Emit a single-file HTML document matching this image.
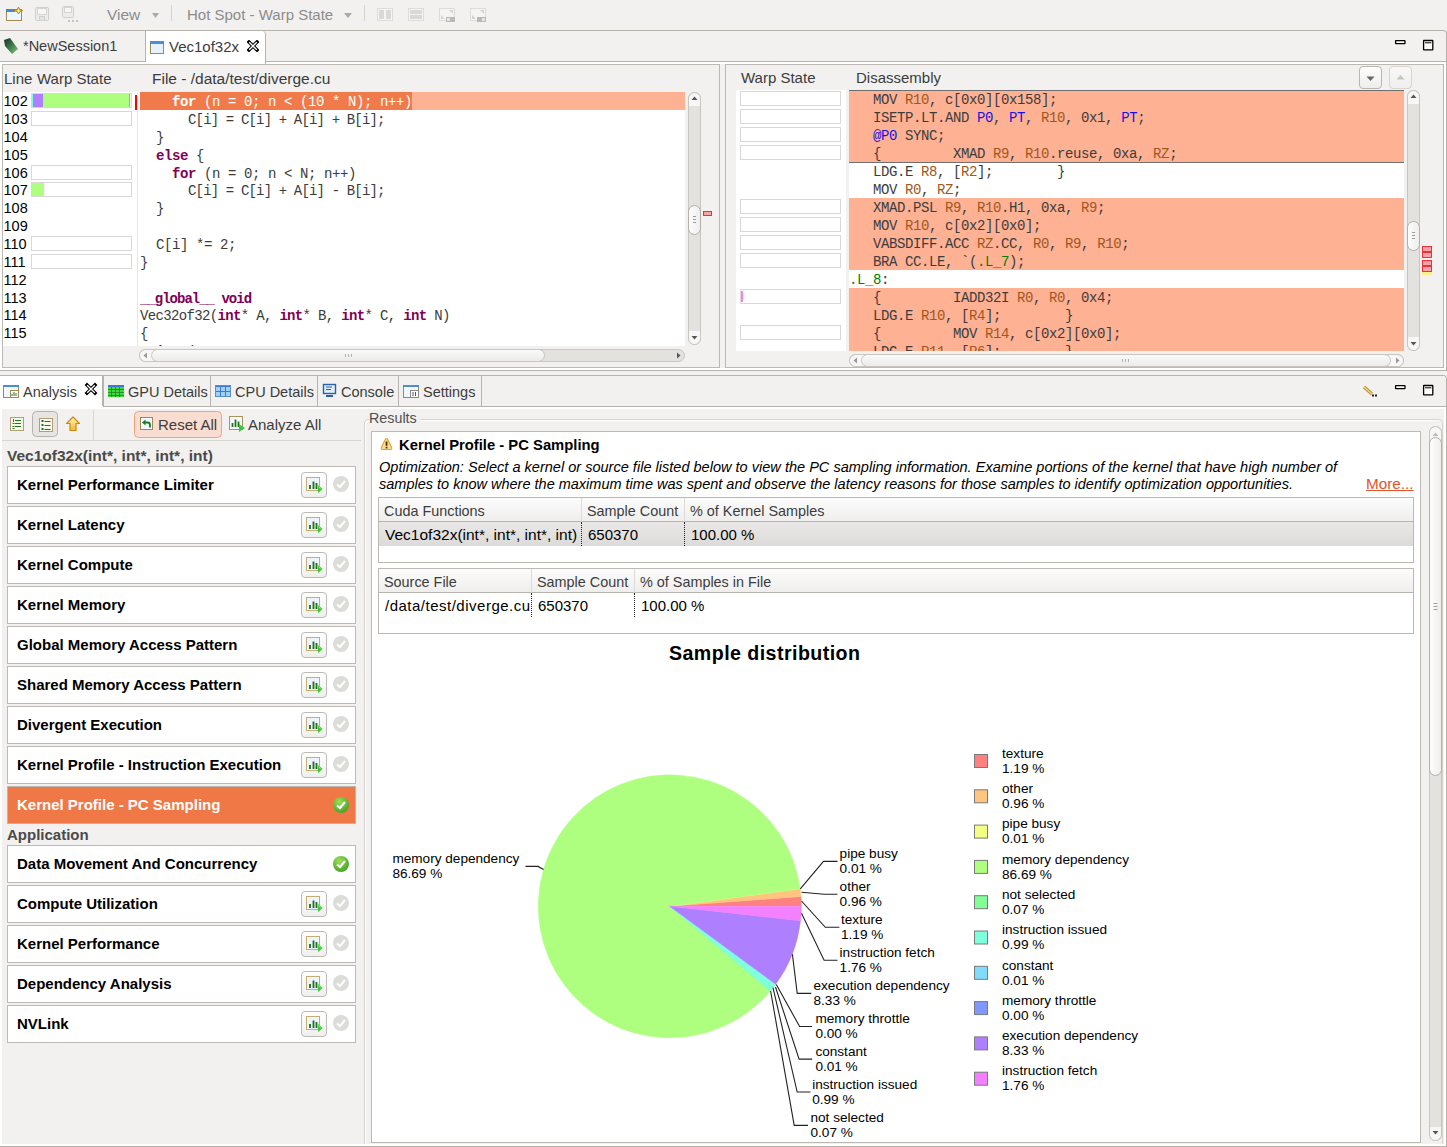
<!DOCTYPE html>
<html><head><meta charset="utf-8">
<style>
*{box-sizing:border-box;margin:0;padding:0}
html,body{width:1447px;height:1147px;overflow:hidden;background:#f2f1f0;font-family:"Liberation Sans",sans-serif;font-size:14px;color:#3c3c3c;position:relative}
.a{position:absolute}
.mono{font-family:"Liberation Mono",monospace;font-size:14px;letter-spacing:-0.4px;white-space:pre}
.t{white-space:pre;line-height:1}
</style></head><body>
<!-- ===== TOP TOOLBAR ===== -->
<svg class="a" style="left:0;top:0" width="500" height="30">
 <!-- new window icon -->
 <rect x="6.5" y="9.5" width="15" height="11" fill="#eaf6fd" stroke="#a28a4e"/>
 <rect x="6" y="9" width="9" height="3" fill="#4a86c8"/>
 <path d="M18.5 7 L20 10 L23 10.5 L20 11.5 L18.5 14 L17 11.5 L14 10.5 L17 10 Z" fill="#f6e27a" stroke="#b38b16" stroke-width="1"/>
 <!-- save (disabled) -->
 <rect x="35.5" y="7.5" width="13" height="13" rx="1" fill="#ececec" stroke="#cfcfcf"/>
 <rect x="37.5" y="8.5" width="9" height="6" fill="#f6f6f6" stroke="#d4d4d4"/>
 <rect x="39.5" y="16.5" width="5" height="4" fill="#e4e4e4" stroke="#d0d0d0"/>
 <!-- save as (disabled) -->
 <rect x="62.5" y="6.5" width="11" height="11" rx="1" fill="#ececec" stroke="#cfcfcf"/>
 <rect x="64.5" y="7.5" width="7" height="5" fill="#f6f6f6" stroke="#d4d4d4"/>
 <rect x="68" y="20" width="2" height="2" fill="#c4c4c4"/><rect x="72" y="20" width="2" height="2" fill="#c4c4c4"/><rect x="76" y="20" width="2" height="2" fill="#c4c4c4"/>
 <!-- triangles -->
 <path d="M152 13 L159 13 L155.5 18 Z" fill="#a9a9a9"/>
 <path d="M344 13 L352 13 L348 18 Z" fill="#a9a9a9"/>
 <!-- separators -->
 <rect x="171" y="5" width="1" height="16" fill="#d6d4d0"/>
 <rect x="364" y="5" width="1" height="16" fill="#d6d4d0"/>
 <!-- disabled layout icons -->
 <g>
  <rect x="377.5" y="8.5" width="15" height="12" fill="#f4f4f3" stroke="#dddcda"/><rect x="379" y="10" width="5" height="9" fill="#d9d9d9"/><rect x="386" y="10" width="5" height="9" fill="#d9d9d9"/>
  <rect x="408.5" y="8.5" width="15" height="12" fill="#f4f4f3" stroke="#dddcda"/><rect x="410" y="10" width="12" height="4" fill="#d9d9d9"/><rect x="410" y="15" width="12" height="4" fill="#d9d9d9"/>
  <rect x="439.5" y="8.5" width="15" height="12" fill="#f4f4f3" stroke="#dddcda"/><path d="M449 10 H453 V14 Z M441 15 V19 H445 Z" fill="#d4d4d4"/><rect x="446" y="17" width="9" height="5" fill="#b8b8b4"/><rect x="447" y="18" width="3" height="3" fill="#e6e6e0"/>
  <rect x="470.5" y="8.5" width="15" height="12" fill="#f4f4f3" stroke="#dddcda"/><path d="M480 10 H484 V14 Z M472 15 V19 H476 Z" fill="#d4d4d4"/><rect x="477" y="17" width="9" height="5" fill="#b8b8b4"/><rect x="482" y="18" width="3" height="3" fill="#e6e6e0"/>
 </g>
</svg>
<div class="a t" style="left:107px;top:7px;font-size:15.5px;color:#8c8c8c">View</div>
<div class="a t" style="left:187px;top:7px;font-size:15px;color:#8c8c8c">Hot Spot - Warp State</div>


<!-- ===== EDITOR TAB FOLDER ===== -->
<div class="a" style="left:0;top:30px;width:1447px;height:341px;border:1px solid #b6b3ac;border-left:none;background:#f2f1f0;border-radius:0 4px 0 0"></div>
<div class="a" style="left:0;top:61px;width:1447px;height:1px;background:#b6b3ac"></div>
<div class="a" style="left:0;top:62px;width:1446px;height:2px;background:#ffffff"></div><div class="a" style="left:0;top:368px;width:1446px;height:2px;background:#ffffff"></div><div class="a" style="left:0;top:62px;width:2px;height:308px;background:#ffffff"></div><div class="a" style="left:1444px;top:62px;width:2px;height:308px;background:#ffffff"></div>
<!-- tab 1 inactive -->
<div class="a" style="left:0;top:31px;width:146px;height:30px;border-right:1px solid #b6b3ac;background:#f2f1f0"></div>
<svg class="a" style="left:3px;top:37px" width="16" height="18"><defs><linearGradient id="ns" x1="0" y1="0" x2="1" y2="1"><stop offset="0" stop-color="#1a2a2a"/><stop offset="0.5" stop-color="#3e7a4a"/><stop offset="1" stop-color="#8ac87a"/></linearGradient></defs><path d="M1 3 L7 1 L15 12 L9 17 L2 9 Z" fill="url(#ns)"/></svg>
<div class="a t" style="left:23px;top:39px;font-size:14.5px;color:#3c3c3c">*NewSession1</div>
<!-- tab 2 active -->
<div class="a" style="left:146px;top:31px;width:120px;height:33px;background:#ffffff;border-right:1px solid #b6b3ac;border-radius:0 4px 0 0"></div>
<svg class="a" style="left:150px;top:41px" width="15" height="14"><rect x="0.5" y="0.5" width="13" height="12" fill="#e6f3fc" stroke="#a08a52"/><rect x="0" y="0" width="14" height="3" fill="#4a8fd4"/></svg>
<div class="a t" style="left:169px;top:39px;font-size:15px;color:#3c3c3c">Vec1of32x</div>
<svg class="a" style="left:247px;top:40px" width="12" height="12"><path d="M2 2 L10 10 M10 2 L2 10" stroke="#000" stroke-width="3.4" stroke-linecap="square"/><path d="M2.2 2.2 L9.8 9.8 M9.8 2.2 L2.2 9.8" stroke="#fff" stroke-width="1.3" stroke-linecap="butt"/></svg>
<!-- min/max -->
<svg class="a" style="left:1390px;top:36px" width="50" height="18"><rect x="5.6" y="4.6" width="9.4" height="3" rx="0.3" fill="#fff" stroke="#000" stroke-width="1.3"/><rect x="33.6" y="4.5" width="9.2" height="9.3" rx="0.3" fill="#fff" stroke="#000" stroke-width="1.3"/><path d="M35 6.8 H41.4" stroke="#000" stroke-width="1"/></svg>

<!-- ===== LEFT EDITOR ===== -->
<div class="a" style="left:2px;top:64px;width:718px;height:304px;border:1px solid #bcb9b2;background:#f2f1f0"></div>
<div class="a t" style="left:4px;top:71px;font-size:15px;color:#3c3c3c">Line</div>
<div class="a t" style="left:37px;top:71px;font-size:15px;color:#3c3c3c">Warp State</div>
<div class="a t" style="left:152px;top:71px;font-size:15.5px;color:#3c3c3c">File - /data/test/diverge.cu</div>
<div class="a" style="left:3px;top:92px;width:134px;height:254px;background:#fff;overflow:hidden" id="gut">
<div class="a t" style="left:0.5px;top:2px;font-size:14.5px;color:#000">102</div>
<div class="a" style="left:28px;top:1px;width:101px;height:15px;border:1px solid #d8d8d8;background:#fff"></div>
<div class="a" style="left:29px;top:2px;width:1px;height:13px;background:#80ffdc"></div>
<div class="a" style="left:30px;top:2px;width:10px;height:13px;background:#ae80ff"></div>
<div class="a" style="left:40px;top:2px;width:86px;height:13px;background:#aeff80"></div>
<div class="a" style="left:126px;top:2px;width:1px;height:13px;background:#ff8080"></div>
<div class="a t" style="left:0.5px;top:20px;font-size:14.5px;color:#000">103</div>
<div class="a" style="left:28px;top:19px;width:101px;height:15px;border:1px solid #d8d8d8;background:#fff"></div>
<div class="a t" style="left:0.5px;top:38px;font-size:14.5px;color:#000">104</div>
<div class="a t" style="left:0.5px;top:56px;font-size:14.5px;color:#000">105</div>
<div class="a t" style="left:0.5px;top:74px;font-size:14.5px;color:#000">106</div>
<div class="a" style="left:28px;top:73px;width:101px;height:15px;border:1px solid #d8d8d8;background:#fff"></div>
<div class="a t" style="left:0.5px;top:91px;font-size:14.5px;color:#000">107</div>
<div class="a" style="left:28px;top:90px;width:101px;height:15px;border:1px solid #d8d8d8;background:#fff"></div>
<div class="a" style="left:29px;top:91px;width:12px;height:13px;background:#aeff80"></div>
<div class="a t" style="left:0.5px;top:109px;font-size:14.5px;color:#000">108</div>
<div class="a t" style="left:0.5px;top:127px;font-size:14.5px;color:#000">109</div>
<div class="a t" style="left:0.5px;top:145px;font-size:14.5px;color:#000">110</div>
<div class="a" style="left:28px;top:144px;width:101px;height:15px;border:1px solid #d8d8d8;background:#fff"></div>
<div class="a t" style="left:0.5px;top:163px;font-size:14.5px;color:#000">111</div>
<div class="a" style="left:28px;top:162px;width:101px;height:15px;border:1px solid #d8d8d8;background:#fff"></div>
<div class="a t" style="left:0.5px;top:181px;font-size:14.5px;color:#000">112</div>
<div class="a t" style="left:0.5px;top:199px;font-size:14.5px;color:#000">113</div>
<div class="a t" style="left:0.5px;top:216px;font-size:14.5px;color:#000">114</div>
<div class="a t" style="left:0.5px;top:234px;font-size:14.5px;color:#000">115</div>
<div class="a t" style="left:0.5px;top:252px;font-size:14.5px;color:#000">116</div>
<div class="a" style="left:132px;top:3px;width:2px;height:15px;background:#ff0000"></div>
</div>
<div class="a" style="left:137px;top:92px;width:1px;height:254px;background:#e6e6e6"></div>
<div class="a" style="left:138px;top:92px;width:547px;height:254px;background:#fff;overflow:hidden">
<div class="a" style="left:2px;top:0;width:545px;height:18px;background:#ffb194"></div>
<div class="a" style="left:2px;top:0;width:272px;height:18px;background:#f07a4a"></div>
<div class="a mono" style="left:2px;top:2px;line-height:16px"><span style="color:#fff">    </span><span style="color:#fff;font-weight:bold">for</span><span style="color:#fff"> (n = 0; n < (10 * N); n++)</span></div>
<div class="a mono" style="left:2px;top:20px;line-height:16px"><span style="color:#3c3c3c">      </span><span style="color:#3c3c3c;letter-spacing:-0.84px">C[i] = C[i] + A[i] + B[i];</span></div>
<div class="a mono" style="left:2px;top:38px;line-height:16px"><span style="color:#3c3c3c">  }</span></div>
<div class="a mono" style="left:2px;top:56px;line-height:16px"><span style="color:#3c3c3c">  </span><span style="color:#7f0055;font-weight:bold">else</span><span style="color:#3c3c3c"> {</span></div>
<div class="a mono" style="left:2px;top:74px;line-height:16px"><span style="color:#3c3c3c">    </span><span style="color:#7f0055;font-weight:bold">for</span><span style="color:#3c3c3c"> (n = 0; n < N; n++)</span></div>
<div class="a mono" style="left:2px;top:91px;line-height:16px"><span style="color:#3c3c3c">      </span><span style="color:#3c3c3c;letter-spacing:-0.84px">C[i] = C[i] + A[i] - B[i];</span></div>
<div class="a mono" style="left:2px;top:109px;line-height:16px"><span style="color:#3c3c3c">  }</span></div>
<div class="a mono" style="left:2px;top:127px;line-height:16px"></div>
<div class="a mono" style="left:2px;top:145px;line-height:16px"><span style="color:#3c3c3c">  C[i] *= 2;</span></div>
<div class="a mono" style="left:2px;top:163px;line-height:16px"><span style="color:#3c3c3c">}</span></div>
<div class="a mono" style="left:2px;top:181px;line-height:16px"></div>
<div class="a mono" style="left:2px;top:199px;line-height:16px;letter-spacing:-1px"><span style="color:#7f0055;font-weight:bold">__global__</span><span style="color:#3c3c3c"> </span><span style="color:#7f0055;font-weight:bold">void</span></div>
<div class="a mono" style="left:2px;top:216px;line-height:16px;letter-spacing:-0.66px"><span style="color:#3c3c3c">Vec32of32(</span><span style="color:#7f0055;font-weight:bold">int</span><span style="color:#3c3c3c">* A, </span><span style="color:#7f0055;font-weight:bold">int</span><span style="color:#3c3c3c">* B, </span><span style="color:#7f0055;font-weight:bold">int</span><span style="color:#3c3c3c">* C, </span><span style="color:#7f0055;font-weight:bold">int</span><span style="color:#3c3c3c"> N)</span></div>
<div class="a mono" style="left:2px;top:234px;line-height:16px"><span style="color:#3c3c3c">{</span></div>
<div class="a mono" style="left:2px;top:252px;line-height:16px"><span style="color:#3c3c3c">  </span><span style="color:#7f0055;font-weight:bold">int</span><span style="color:#3c3c3c"> i;</span></div>
</div>
<div class="a" style="left:688px;top:92px;width:13px;height:253px;border:1px solid #c9c6c0;border-radius:7px;background:#e3e2df"></div>
<div class="a" style="left:688px;top:92px;width:13px;height:14px;border:1px solid #c9c6c0;border-bottom:none;border-radius:7px 7px 0 0;background:#f7f7f7"></div>
<div class="a" style="left:688px;top:331px;width:13px;height:14px;border:1px solid #c9c6c0;border-top:none;border-radius:0 0 7px 7px;background:#f7f7f7"></div>
<svg class="a" style="left:688px;top:92px" width="13" height="253"><path d="M3.5 8 L9.5 8 L6.5 4.5 Z" fill="#555"/><path d="M3.5 244 L9.5 244 L6.5 247.5 Z" fill="#555"/></svg>
<div class="a" style="left:688px;top:205px;width:13px;height:30px;border:1px solid #b3afa9;border-radius:7px;background:linear-gradient(90deg,#fdfdfd,#efeeed)"></div>
<svg class="a" style="left:688px;top:205px" width="13" height="30"><path d="M5 11.5 H8 M5 14.5 H8 M5 17.5 H8" stroke="#9a9a9a" stroke-width="1"/></svg>
<div class="a" style="left:703px;top:211px;width:9px;height:5px;border:1px solid #e8323c;background:#f6a2a6"></div>
<div class="a" style="left:139px;top:349px;width:546px;height:13px;border:1px solid #c9c6c0;border-radius:7px;background:#e3e2df"></div>
<div class="a" style="left:139px;top:349px;width:16px;height:13px;border:1px solid #c9c6c0;border-right:none;border-radius:7px 0 0 7px;background:#f7f7f7"></div>
<div class="a" style="left:151px;top:349px;width:394px;height:13px;border:1px solid #c9c6c0;border-radius:7px;background:linear-gradient(#fafafa,#ebebea)"></div>
<svg class="a" style="left:139px;top:349px" width="546" height="13"><path d="M206.5 5 V8 M209.5 5 V8 M212.5 5 V8" stroke="#b0b0b0"/><path d="M8 3.5 L8 9.5 L4.5 6.5 Z" fill="#999"/><path d="M538 3.5 L538 9.5 L541.5 6.5 Z" fill="#555"/></svg>
<!-- ===== RIGHT EDITOR ===== -->
<div class="a" style="left:725px;top:64px;width:719px;height:304px;border:1px solid #bcb9b2;background:#f2f1f0"></div>
<div class="a t" style="left:741px;top:70px;font-size:15px;color:#3c3c3c">Warp State</div>
<div class="a t" style="left:856px;top:70px;font-size:15px;color:#3c3c3c">Disassembly</div>
<div class="a" style="left:1359px;top:66px;width:23px;height:23px;border:1px solid #b9b6b0;border-radius:4px;background:linear-gradient(#fdfdfd,#eeeeed)"></div>
<div class="a" style="left:1389px;top:66px;width:23px;height:23px;border:1px solid #d6d4cf;border-radius:4px;background:linear-gradient(#f8f8f7,#efefee)"></div>
<svg class="a" style="left:1359px;top:66px" width="60" height="23"><path d="M7.5 10.5 L15.5 10.5 L11.5 15 Z" fill="#666"/><path d="M37.5 13.5 L45.5 13.5 L41.5 9 Z" fill="#c4c4c4"/></svg>
<div class="a" style="left:736px;top:90px;width:110px;height:261px;background:#fff;overflow:hidden">
<div class="a" style="left:4px;top:1px;width:101px;height:15px;border:1px solid #d8d8d8"></div>
<div class="a" style="left:4px;top:19px;width:101px;height:15px;border:1px solid #d8d8d8"></div>
<div class="a" style="left:4px;top:37px;width:101px;height:15px;border:1px solid #d8d8d8"></div>
<div class="a" style="left:4px;top:55px;width:101px;height:15px;border:1px solid #d8d8d8"></div>
<div class="a" style="left:4px;top:109px;width:101px;height:15px;border:1px solid #d8d8d8"></div>
<div class="a" style="left:4px;top:127px;width:101px;height:15px;border:1px solid #d8d8d8"></div>
<div class="a" style="left:4px;top:145px;width:101px;height:15px;border:1px solid #d8d8d8"></div>
<div class="a" style="left:4px;top:163px;width:101px;height:15px;border:1px solid #d8d8d8"></div>
<div class="a" style="left:4px;top:199px;width:101px;height:15px;border:1px solid #d8d8d8"></div>
<div class="a" style="left:5px;top:201px;width:2px;height:11px;background:#f380ff"></div>
<div class="a" style="left:4px;top:235px;width:101px;height:15px;border:1px solid #d8d8d8"></div>
</div>
<div class="a" style="left:849px;top:90px;width:555px;height:261px;background:#fff;overflow:hidden">
<div class="a" style="left:0;top:0px;width:555px;height:18px;background:#ffb194"></div>
<div class="a" style="left:0;top:18px;width:555px;height:18px;background:#ffb194"></div>
<div class="a" style="left:0;top:36px;width:555px;height:18px;background:#ffb194"></div>
<div class="a" style="left:0;top:54px;width:555px;height:18px;background:#ffb194"></div>
<div class="a" style="left:0;top:108px;width:555px;height:18px;background:#ffb194"></div>
<div class="a" style="left:0;top:126px;width:555px;height:18px;background:#ffb194"></div>
<div class="a" style="left:0;top:144px;width:555px;height:18px;background:#ffb194"></div>
<div class="a" style="left:0;top:162px;width:555px;height:18px;background:#ffb194"></div>
<div class="a" style="left:0;top:198px;width:555px;height:18px;background:#ffb194"></div>
<div class="a" style="left:0;top:216px;width:555px;height:18px;background:#ffb194"></div>
<div class="a" style="left:0;top:234px;width:555px;height:18px;background:#ffb194"></div>
<div class="a" style="left:0;top:252px;width:555px;height:18px;background:#ffb194"></div>
<div class="a" style="left:0;top:0;width:555px;height:1px;background:#6e6e6e"></div>
<div class="a" style="left:0;top:72px;width:555px;height:1px;background:#6e6e6e"></div>
<div class="a mono" style="left:0;top:2px;line-height:17px"><span style="color:#3c3c3c">   MOV </span><span style="color:#a2561a">R10</span><span style="color:#3c3c3c">, c[0x0][0x158];</span></div>
<div class="a mono" style="left:0;top:20px;line-height:17px"><span style="color:#3c3c3c">   ISETP.LT.AND </span><span style="color:#1414e6">P0</span><span style="color:#3c3c3c">, </span><span style="color:#1414e6">PT</span><span style="color:#3c3c3c">, </span><span style="color:#a2561a">R10</span><span style="color:#3c3c3c">, 0x1, </span><span style="color:#1414e6">PT</span><span style="color:#3c3c3c">;</span></div>
<div class="a mono" style="left:0;top:38px;line-height:17px"><span style="color:#3c3c3c">   </span><span style="color:#1414e6">@P0</span><span style="color:#3c3c3c"> SYNC;</span></div>
<div class="a mono" style="left:0;top:56px;line-height:17px"><span style="color:#3c3c3c">   {         XMAD </span><span style="color:#a2561a">R9</span><span style="color:#3c3c3c">, </span><span style="color:#a2561a">R10</span><span style="color:#3c3c3c">.reuse, 0xa, </span><span style="color:#a2561a">RZ</span><span style="color:#3c3c3c">;</span></div>
<div class="a mono" style="left:0;top:74px;line-height:17px"><span style="color:#3c3c3c">   LDG.E </span><span style="color:#a2561a">R8</span><span style="color:#3c3c3c">, [</span><span style="color:#a2561a">R2</span><span style="color:#3c3c3c">];        }</span></div>
<div class="a mono" style="left:0;top:92px;line-height:17px"><span style="color:#3c3c3c">   MOV </span><span style="color:#a2561a">R0</span><span style="color:#3c3c3c">, </span><span style="color:#a2561a">RZ</span><span style="color:#3c3c3c">;</span></div>
<div class="a mono" style="left:0;top:110px;line-height:17px"><span style="color:#3c3c3c">   XMAD.PSL </span><span style="color:#a2561a">R9</span><span style="color:#3c3c3c">, </span><span style="color:#a2561a">R10</span><span style="color:#3c3c3c">.H1, 0xa, </span><span style="color:#a2561a">R9</span><span style="color:#3c3c3c">;</span></div>
<div class="a mono" style="left:0;top:128px;line-height:17px"><span style="color:#3c3c3c">   MOV </span><span style="color:#a2561a">R10</span><span style="color:#3c3c3c">, c[0x2][0x0];</span></div>
<div class="a mono" style="left:0;top:146px;line-height:17px"><span style="color:#3c3c3c">   VABSDIFF.ACC </span><span style="color:#a2561a">RZ</span><span style="color:#3c3c3c">.CC, </span><span style="color:#a2561a">R0</span><span style="color:#3c3c3c">, </span><span style="color:#a2561a">R9</span><span style="color:#3c3c3c">, </span><span style="color:#a2561a">R10</span><span style="color:#3c3c3c">;</span></div>
<div class="a mono" style="left:0;top:164px;line-height:17px"><span style="color:#3c3c3c">   BRA CC.LE, `(</span><span style="color:#008000">.L_7</span><span style="color:#3c3c3c">);</span></div>
<div class="a mono" style="left:0;top:182px;line-height:17px"><span style="color:#008000">.L_8</span><span style="color:#3c3c3c">:</span></div>
<div class="a mono" style="left:0;top:200px;line-height:17px"><span style="color:#3c3c3c">   {         IADD32I </span><span style="color:#a2561a">R0</span><span style="color:#3c3c3c">, </span><span style="color:#a2561a">R0</span><span style="color:#3c3c3c">, 0x4;</span></div>
<div class="a mono" style="left:0;top:218px;line-height:17px"><span style="color:#3c3c3c">   LDG.E </span><span style="color:#a2561a">R10</span><span style="color:#3c3c3c">, [</span><span style="color:#a2561a">R4</span><span style="color:#3c3c3c">];        }</span></div>
<div class="a mono" style="left:0;top:236px;line-height:17px"><span style="color:#3c3c3c">   {         MOV </span><span style="color:#a2561a">R14</span><span style="color:#3c3c3c">, c[0x2][0x0];</span></div>
<div class="a mono" style="left:0;top:254px;line-height:17px"><span style="color:#3c3c3c">   LDG.E </span><span style="color:#a2561a">R11</span><span style="color:#3c3c3c">, [</span><span style="color:#a2561a">R6</span><span style="color:#3c3c3c">];        }</span></div>
</div>
<div class="a" style="left:1407px;top:90px;width:13px;height:261px;border:1px solid #c9c6c0;border-radius:7px;background:#e3e2df"></div>
<div class="a" style="left:1407px;top:90px;width:13px;height:14px;border:1px solid #c9c6c0;border-bottom:none;border-radius:7px 7px 0 0;background:#f7f7f7"></div>
<div class="a" style="left:1407px;top:337px;width:13px;height:14px;border:1px solid #c9c6c0;border-top:none;border-radius:0 0 7px 7px;background:#f7f7f7"></div>
<svg class="a" style="left:1407px;top:90px" width="13" height="261"><path d="M3.5 8 L9.5 8 L6.5 4.5 Z" fill="#555"/><path d="M3.5 252 L9.5 252 L6.5 255.5 Z" fill="#555"/></svg>
<div class="a" style="left:1407px;top:221px;width:13px;height:30px;border:1px solid #b3afa9;border-radius:7px;background:linear-gradient(90deg,#fdfdfd,#efeeed)"></div>
<svg class="a" style="left:1407px;top:221px" width="13" height="30"><path d="M5 11.5 H8 M5 14.5 H8 M5 17.5 H8" stroke="#9a9a9a" stroke-width="1"/></svg>
<div class="a" style="left:1422px;top:246px;width:10px;height:6px;border:1px solid #e8323c;background:#f6a2a6"></div>
<div class="a" style="left:1422px;top:252px;width:10px;height:6px;border:1px solid #e8323c;background:#f6a2a6"></div>
<div class="a" style="left:1422px;top:260px;width:10px;height:6px;border:1px solid #e8323c;background:#f6a2a6"></div>
<div class="a" style="left:1422px;top:266px;width:10px;height:6px;border:1px solid #e8323c;background:#f6a2a6"></div>
<div class="a" style="left:1422px;top:272px;width:10px;height:3px;background:#fbf08a"></div>
<div class="a" style="left:849px;top:354px;width:555px;height:13px;border:1px solid #c9c6c0;border-radius:7px;background:#e3e2df"></div>
<div class="a" style="left:849px;top:354px;width:16px;height:13px;border:1px solid #c9c6c0;border-right:none;border-radius:7px 0 0 7px;background:#f7f7f7"></div>
<div class="a" style="left:1389px;top:354px;width:15px;height:13px;border:1px solid #c9c6c0;border-left:none;border-radius:0 7px 7px 0;background:#f7f7f7"></div>
<div class="a" style="left:861px;top:354px;width:530px;height:13px;border:1px solid #c9c6c0;border-radius:7px;background:linear-gradient(#fafafa,#ebebea)"></div>
<svg class="a" style="left:849px;top:354px" width="555" height="13"><path d="M273.5 5 V8 M276.5 5 V8 M279.5 5 V8" stroke="#b0b0b0"/><path d="M8 3.5 L8 9.5 L4.5 6.5 Z" fill="#999"/><path d="M547 3.5 L547 9.5 L550.5 6.5 Z" fill="#999"/></svg>
<!-- ===== BOTTOM FOLDER ===== -->
<div class="a" style="left:0;top:375px;width:1447px;height:772px;border:1px solid #b6b3ac;border-left:none;border-radius:0 4px 0 0;background:#fff"></div>
<div class="a" style="left:2px;top:409px;width:1442px;height:735px;background:#f2f1f0"></div>
<div class="a" style="left:481px;top:376px;width:965px;height:30px;background:#f2f1f0;border-radius:0 4px 0 0"></div>
<div class="a" style="left:0;top:376px;width:103px;height:31px;background:#ffffff;border-radius:0 4px 0 0"></div>
<div class="a" style="left:103px;top:376px;width:108px;height:30px;border-left:1px solid #b6b3ac;border-right:1px solid #b6b3ac;background:#f2f1f0"></div>
<div class="a" style="left:210px;top:376px;width:108px;height:30px;border-left:1px solid #b6b3ac;border-right:1px solid #b6b3ac;background:#f2f1f0"></div>
<div class="a" style="left:317px;top:376px;width:82px;height:30px;border-left:1px solid #b6b3ac;border-right:1px solid #b6b3ac;background:#f2f1f0"></div>
<div class="a" style="left:398px;top:376px;width:84px;height:30px;border-left:1px solid #b6b3ac;border-right:1px solid #b6b3ac;background:#f2f1f0"></div>
<div class="a" style="left:481px;top:406px;width:965px;height:1px;background:#b6b3ac"></div>
<div class="a" style="left:0;top:407px;width:1446px;height:2px;background:#ffffff"></div>
<div class="a" style="left:103px;top:406px;width:378px;height:1px;background:#b6b3ac"></div>
<div class="a" style="left:102px;top:376px;width:1px;height:30px;background:#b6b3ac"></div>
<svg class="a" style="left:0;top:376px" width="500" height="30">
 <rect x="3.5" y="9.5" width="15" height="12" fill="#f2f8fd" stroke="#a08a52"/><rect x="3" y="9" width="16" height="2" fill="#4a8fd4"/><rect x="10.5" y="14.5" width="8" height="7" fill="#fff" stroke="#a08a52"/><path d="M12 20 V18 M14 20 V16 M16 20 V17" stroke="#2a7a2a" stroke-width="1"/>
 <path d="M87 9 L95 17 M95 9 L87 17" stroke="#000" stroke-width="3.4" stroke-linecap="square"/><path d="M87.2 9.2 L94.8 16.8 M94.8 9.2 L87.2 16.8" stroke="#fff" stroke-width="1.3"/>
 <rect x="108" y="9" width="16" height="12" fill="#3fd83f"/><rect x="108" y="9" width="16" height="2" fill="#3a7bd0"/><path d="M108 13.5 H124 M108 16.5 H124 M108 19.5 H124 M111.5 11 V21 M115.5 11 V21 M119.5 11 V21" stroke="#1a8a1a" stroke-width="0.8"/>
 <rect x="215" y="9" width="16" height="12" fill="#9fd0f5"/><rect x="215" y="9" width="16" height="2" fill="#3a7bd0"/><path d="M215 15.5 H231 M220.5 11 V21 M225.5 11 V21" stroke="#3a7bd0" stroke-width="1"/><rect x="215.5" y="9.5" width="15" height="11" fill="none" stroke="#5a8fc8"/>
 <rect x="323.5" y="8.5" width="12" height="9" fill="#dff0fd" stroke="#2c5fa8" stroke-width="1.4"/><path d="M326 11 H332 M326 13.5 H331" stroke="#2c5fa8"/><rect x="326" y="19" width="7" height="2" fill="#2c5fa8"/>
 <rect x="403.5" y="9.5" width="15" height="12" fill="#f2f8fd" stroke="#a08a52"/><rect x="403" y="9" width="16" height="2" fill="#4a8fd4"/><rect x="410.5" y="14.5" width="8" height="7" fill="#fff" stroke="#8a8a8a"/><path d="M413 16 V20 M415.5 16 V20" stroke="#555"/>
 <path d="M1363 10 L1373 18" stroke="#c8a030" stroke-width="2.5"/>
</svg>
<div class="a t" style="left:23px;top:385px;font-size:14.5px;color:#3c3c3c">Analysis</div>
<div class="a t" style="left:128px;top:385px;font-size:14.5px;color:#3c3c3c">GPU Details</div>
<div class="a t" style="left:235px;top:385px;font-size:14.5px;color:#3c3c3c">CPU Details</div>
<div class="a t" style="left:341px;top:385px;font-size:14.5px;color:#3c3c3c">Console</div>
<div class="a t" style="left:423px;top:385px;font-size:14.5px;color:#3c3c3c">Settings</div>
<svg class="a" style="left:1360px;top:380px" width="80" height="20">
 <path d="M4 7 L12 14" stroke="#b8902a" stroke-width="3.2"/><path d="M4 7 L12 14" stroke="#f0d890" stroke-width="1.2"/><rect x="12" y="14.5" width="2" height="2" fill="#222"/><rect x="15" y="14.5" width="2" height="2" fill="#222"/>
 <rect x="35.6" y="5.6" width="9.4" height="3" rx="0.3" fill="#fff" stroke="#000" stroke-width="1.3"/>
 <rect x="63.6" y="5.5" width="9.2" height="9.3" rx="0.3" fill="#fff" stroke="#000" stroke-width="1.3"/><path d="M65 7.8 H71.4" stroke="#000" stroke-width="1"/>
</svg>
<svg class="a" style="left:0;top:407px" width="370" height="40">
 <rect x="10.5" y="10.5" width="13" height="13" fill="#f6f8ec" stroke="#b0a070"/><path d="M13.5 12 V15 M12.5 16.5 H14.5 M12.5 19.5 H14.5 M12.5 21.5 H14.5" fill="none" stroke="#1e7a1e" stroke-width="1"/><path d="M15 13.5 H21 M15 16.5 H21 M15 19.5 H21" stroke="#1e7a1e" stroke-width="1"/>
 <rect x="32.5" y="4.5" width="25" height="25" rx="4" fill="#e6e5e3" stroke="#b5b2ab"/>
 <rect x="39.5" y="11.5" width="13" height="13" fill="#f6f8ec" stroke="#b0a070"/><path d="M41.5 14 H43.5 M41.5 18 H43.5 M41.5 22 H43.5" stroke="#1e6a1e" stroke-width="2"/><path d="M44.5 14.5 H50.5 M44.5 18.5 H50.5 M44.5 22.5 H50.5" stroke="#1e7a1e" stroke-width="1"/>
 <defs><linearGradient id="upg" x1="0" y1="0" x2="0" y2="1"><stop offset="0" stop-color="#fff6c0"/><stop offset="1" stop-color="#f0b828"/></linearGradient></defs><path d="M73 10 L79.5 16.5 L76 16.5 L76 23.5 L70 23.5 L70 16.5 L66.5 16.5 Z" fill="url(#upg)" stroke="#d08a10" stroke-width="1.2" stroke-linejoin="round"/>
 <rect x="93" y="3" width="1" height="31" fill="#d8d6d1"/>
 <path d="M2 33.5 H361" stroke="#d8d6d1"/>
 <rect x="134.5" y="4.5" width="87" height="26" rx="4" fill="#f8ddd0" stroke="#f3a07c"/>
 <rect x="140.5" y="10.5" width="12" height="12" fill="#f4f8fc" stroke="#9a8a5a"/><path d="M145 15.5 H147.5 Q150 15.5 150 18 V20.5" fill="none" stroke="#1a7a2a" stroke-width="1.8"/><path d="M145.5 12.5 L142 15.5 L145.5 18.5 Z" fill="#1a7a2a"/>
 <rect x="229.5" y="9.5" width="13" height="13" fill="#f6f8fc" stroke="#a8955a"/><path d="M232.5 20 V16 M235.5 20 V12.5 M238.5 20 V14.5" stroke="#1a7a1a" stroke-width="1.8"/><path d="M239 17 L245 21 L239 25 Z" fill="#3cc83c"/>
</svg>
<div class="a t" style="left:158px;top:417px;font-size:15px;color:#3c3c3c">Reset All</div>
<div class="a t" style="left:248px;top:417px;font-size:15px;color:#3c3c3c">Analyze All</div>
<div class="a t" style="left:7px;top:448px;font-size:15.5px;font-weight:bold;color:#4a4a4a">Vec1of32x(int*, int*, int*, int)</div>
<div class="a" style="left:7px;top:466px;width:349px;height:38px;background:#fff;border:1px solid #bdbab3"></div>
<div class="a t" style="left:17px;top:477px;font-size:15px;font-weight:bold;color:#000">Kernel Performance Limiter</div>
<div class="a" style="left:301px;top:472px;width:26px;height:26px;border:1px solid #bdbab4;border-radius:4px;background:linear-gradient(#ffffff,#efefee)"></div>
<svg class="a" style="left:301px;top:472px" width="26" height="26"><rect x="5.5" y="5.5" width="13" height="13" fill="#eef4fc" stroke="#c4ae72"/><path d="M9 17 V13 M12.5 17 V9.5 M15.5 17 V11" stroke="#1e6e1e" stroke-width="1.8"/><path d="M17 13.5 Q17 13 17.5 13.3 L21.5 17 L17.5 20.7 Q17 21 17 20.5 Z" fill="#3cc83c"/><path d="M17.6 14.5 L19.5 16.3" stroke="#b8f070" stroke-width="1"/></svg>
<svg class="a" style="left:332px;top:475px" width="18" height="18"><circle cx="9" cy="9" r="8" fill="#dcdcd8"/><path d="M5 9.5 L8 12 L13 6" fill="none" stroke="#fff" stroke-width="2"/></svg>
<div class="a" style="left:7px;top:506px;width:349px;height:38px;background:#fff;border:1px solid #bdbab3"></div>
<div class="a t" style="left:17px;top:517px;font-size:15px;font-weight:bold;color:#000">Kernel Latency</div>
<div class="a" style="left:301px;top:512px;width:26px;height:26px;border:1px solid #bdbab4;border-radius:4px;background:linear-gradient(#ffffff,#efefee)"></div>
<svg class="a" style="left:301px;top:512px" width="26" height="26"><rect x="5.5" y="5.5" width="13" height="13" fill="#eef4fc" stroke="#c4ae72"/><path d="M9 17 V13 M12.5 17 V9.5 M15.5 17 V11" stroke="#1e6e1e" stroke-width="1.8"/><path d="M17 13.5 Q17 13 17.5 13.3 L21.5 17 L17.5 20.7 Q17 21 17 20.5 Z" fill="#3cc83c"/><path d="M17.6 14.5 L19.5 16.3" stroke="#b8f070" stroke-width="1"/></svg>
<svg class="a" style="left:332px;top:515px" width="18" height="18"><circle cx="9" cy="9" r="8" fill="#dcdcd8"/><path d="M5 9.5 L8 12 L13 6" fill="none" stroke="#fff" stroke-width="2"/></svg>
<div class="a" style="left:7px;top:546px;width:349px;height:38px;background:#fff;border:1px solid #bdbab3"></div>
<div class="a t" style="left:17px;top:557px;font-size:15px;font-weight:bold;color:#000">Kernel Compute</div>
<div class="a" style="left:301px;top:552px;width:26px;height:26px;border:1px solid #bdbab4;border-radius:4px;background:linear-gradient(#ffffff,#efefee)"></div>
<svg class="a" style="left:301px;top:552px" width="26" height="26"><rect x="5.5" y="5.5" width="13" height="13" fill="#eef4fc" stroke="#c4ae72"/><path d="M9 17 V13 M12.5 17 V9.5 M15.5 17 V11" stroke="#1e6e1e" stroke-width="1.8"/><path d="M17 13.5 Q17 13 17.5 13.3 L21.5 17 L17.5 20.7 Q17 21 17 20.5 Z" fill="#3cc83c"/><path d="M17.6 14.5 L19.5 16.3" stroke="#b8f070" stroke-width="1"/></svg>
<svg class="a" style="left:332px;top:555px" width="18" height="18"><circle cx="9" cy="9" r="8" fill="#dcdcd8"/><path d="M5 9.5 L8 12 L13 6" fill="none" stroke="#fff" stroke-width="2"/></svg>
<div class="a" style="left:7px;top:586px;width:349px;height:38px;background:#fff;border:1px solid #bdbab3"></div>
<div class="a t" style="left:17px;top:597px;font-size:15px;font-weight:bold;color:#000">Kernel Memory</div>
<div class="a" style="left:301px;top:592px;width:26px;height:26px;border:1px solid #bdbab4;border-radius:4px;background:linear-gradient(#ffffff,#efefee)"></div>
<svg class="a" style="left:301px;top:592px" width="26" height="26"><rect x="5.5" y="5.5" width="13" height="13" fill="#eef4fc" stroke="#c4ae72"/><path d="M9 17 V13 M12.5 17 V9.5 M15.5 17 V11" stroke="#1e6e1e" stroke-width="1.8"/><path d="M17 13.5 Q17 13 17.5 13.3 L21.5 17 L17.5 20.7 Q17 21 17 20.5 Z" fill="#3cc83c"/><path d="M17.6 14.5 L19.5 16.3" stroke="#b8f070" stroke-width="1"/></svg>
<svg class="a" style="left:332px;top:595px" width="18" height="18"><circle cx="9" cy="9" r="8" fill="#dcdcd8"/><path d="M5 9.5 L8 12 L13 6" fill="none" stroke="#fff" stroke-width="2"/></svg>
<div class="a" style="left:7px;top:626px;width:349px;height:38px;background:#fff;border:1px solid #bdbab3"></div>
<div class="a t" style="left:17px;top:637px;font-size:15px;font-weight:bold;color:#000">Global Memory Access Pattern</div>
<div class="a" style="left:301px;top:632px;width:26px;height:26px;border:1px solid #bdbab4;border-radius:4px;background:linear-gradient(#ffffff,#efefee)"></div>
<svg class="a" style="left:301px;top:632px" width="26" height="26"><rect x="5.5" y="5.5" width="13" height="13" fill="#eef4fc" stroke="#c4ae72"/><path d="M9 17 V13 M12.5 17 V9.5 M15.5 17 V11" stroke="#1e6e1e" stroke-width="1.8"/><path d="M17 13.5 Q17 13 17.5 13.3 L21.5 17 L17.5 20.7 Q17 21 17 20.5 Z" fill="#3cc83c"/><path d="M17.6 14.5 L19.5 16.3" stroke="#b8f070" stroke-width="1"/></svg>
<svg class="a" style="left:332px;top:635px" width="18" height="18"><circle cx="9" cy="9" r="8" fill="#dcdcd8"/><path d="M5 9.5 L8 12 L13 6" fill="none" stroke="#fff" stroke-width="2"/></svg>
<div class="a" style="left:7px;top:666px;width:349px;height:38px;background:#fff;border:1px solid #bdbab3"></div>
<div class="a t" style="left:17px;top:677px;font-size:15px;font-weight:bold;color:#000">Shared Memory Access Pattern</div>
<div class="a" style="left:301px;top:672px;width:26px;height:26px;border:1px solid #bdbab4;border-radius:4px;background:linear-gradient(#ffffff,#efefee)"></div>
<svg class="a" style="left:301px;top:672px" width="26" height="26"><rect x="5.5" y="5.5" width="13" height="13" fill="#eef4fc" stroke="#c4ae72"/><path d="M9 17 V13 M12.5 17 V9.5 M15.5 17 V11" stroke="#1e6e1e" stroke-width="1.8"/><path d="M17 13.5 Q17 13 17.5 13.3 L21.5 17 L17.5 20.7 Q17 21 17 20.5 Z" fill="#3cc83c"/><path d="M17.6 14.5 L19.5 16.3" stroke="#b8f070" stroke-width="1"/></svg>
<svg class="a" style="left:332px;top:675px" width="18" height="18"><circle cx="9" cy="9" r="8" fill="#dcdcd8"/><path d="M5 9.5 L8 12 L13 6" fill="none" stroke="#fff" stroke-width="2"/></svg>
<div class="a" style="left:7px;top:706px;width:349px;height:38px;background:#fff;border:1px solid #bdbab3"></div>
<div class="a t" style="left:17px;top:717px;font-size:15px;font-weight:bold;color:#000">Divergent Execution</div>
<div class="a" style="left:301px;top:712px;width:26px;height:26px;border:1px solid #bdbab4;border-radius:4px;background:linear-gradient(#ffffff,#efefee)"></div>
<svg class="a" style="left:301px;top:712px" width="26" height="26"><rect x="5.5" y="5.5" width="13" height="13" fill="#eef4fc" stroke="#c4ae72"/><path d="M9 17 V13 M12.5 17 V9.5 M15.5 17 V11" stroke="#1e6e1e" stroke-width="1.8"/><path d="M17 13.5 Q17 13 17.5 13.3 L21.5 17 L17.5 20.7 Q17 21 17 20.5 Z" fill="#3cc83c"/><path d="M17.6 14.5 L19.5 16.3" stroke="#b8f070" stroke-width="1"/></svg>
<svg class="a" style="left:332px;top:715px" width="18" height="18"><circle cx="9" cy="9" r="8" fill="#dcdcd8"/><path d="M5 9.5 L8 12 L13 6" fill="none" stroke="#fff" stroke-width="2"/></svg>
<div class="a" style="left:7px;top:746px;width:349px;height:38px;background:#fff;border:1px solid #bdbab3"></div>
<div class="a t" style="left:17px;top:757px;font-size:15px;font-weight:bold;color:#000">Kernel Profile - Instruction Execution</div>
<div class="a" style="left:301px;top:752px;width:26px;height:26px;border:1px solid #bdbab4;border-radius:4px;background:linear-gradient(#ffffff,#efefee)"></div>
<svg class="a" style="left:301px;top:752px" width="26" height="26"><rect x="5.5" y="5.5" width="13" height="13" fill="#eef4fc" stroke="#c4ae72"/><path d="M9 17 V13 M12.5 17 V9.5 M15.5 17 V11" stroke="#1e6e1e" stroke-width="1.8"/><path d="M17 13.5 Q17 13 17.5 13.3 L21.5 17 L17.5 20.7 Q17 21 17 20.5 Z" fill="#3cc83c"/><path d="M17.6 14.5 L19.5 16.3" stroke="#b8f070" stroke-width="1"/></svg>
<svg class="a" style="left:332px;top:755px" width="18" height="18"><circle cx="9" cy="9" r="8" fill="#dcdcd8"/><path d="M5 9.5 L8 12 L13 6" fill="none" stroke="#fff" stroke-width="2"/></svg>
<div class="a" style="left:7px;top:786px;width:349px;height:38px;background:#f07846;border:1px solid #b9b6af"></div>
<div class="a t" style="left:17px;top:797px;font-size:15px;font-weight:bold;color:#fff">Kernel Profile - PC Sampling</div>
<svg class="a" style="left:332px;top:796px" width="18" height="18"><defs><radialGradient id="gg786" cx="0.4" cy="0.3" r="0.8"><stop offset="0" stop-color="#9be05a"/><stop offset="1" stop-color="#3e9a1e"/></radialGradient></defs><circle cx="9" cy="9" r="8" fill="url(#gg786)"/><path d="M5 9.5 L8 12 L13 6" fill="none" stroke="#fff" stroke-width="2.2"/></svg>
<div class="a t" style="left:7px;top:827px;font-size:15px;font-weight:bold;color:#4a4a4a">Application</div>
<div class="a" style="left:7px;top:845px;width:349px;height:38px;background:#fff;border:1px solid #bdbab3"></div>
<div class="a t" style="left:17px;top:856px;font-size:15px;font-weight:bold;color:#000">Data Movement And Concurrency</div>
<svg class="a" style="left:332px;top:855px" width="18" height="18"><defs><radialGradient id="gg845" cx="0.4" cy="0.3" r="0.8"><stop offset="0" stop-color="#9be05a"/><stop offset="1" stop-color="#3e9a1e"/></radialGradient></defs><circle cx="9" cy="9" r="8" fill="url(#gg845)"/><path d="M5 9.5 L8 12 L13 6" fill="none" stroke="#fff" stroke-width="2.2"/></svg>
<div class="a" style="left:7px;top:885px;width:349px;height:38px;background:#fff;border:1px solid #bdbab3"></div>
<div class="a t" style="left:17px;top:896px;font-size:15px;font-weight:bold;color:#000">Compute Utilization</div>
<div class="a" style="left:301px;top:891px;width:26px;height:26px;border:1px solid #bdbab4;border-radius:4px;background:linear-gradient(#ffffff,#efefee)"></div>
<svg class="a" style="left:301px;top:891px" width="26" height="26"><rect x="5.5" y="5.5" width="13" height="13" fill="#eef4fc" stroke="#c4ae72"/><path d="M9 17 V13 M12.5 17 V9.5 M15.5 17 V11" stroke="#1e6e1e" stroke-width="1.8"/><path d="M17 13.5 Q17 13 17.5 13.3 L21.5 17 L17.5 20.7 Q17 21 17 20.5 Z" fill="#3cc83c"/><path d="M17.6 14.5 L19.5 16.3" stroke="#b8f070" stroke-width="1"/></svg>
<svg class="a" style="left:332px;top:894px" width="18" height="18"><circle cx="9" cy="9" r="8" fill="#dcdcd8"/><path d="M5 9.5 L8 12 L13 6" fill="none" stroke="#fff" stroke-width="2"/></svg>
<div class="a" style="left:7px;top:925px;width:349px;height:38px;background:#fff;border:1px solid #bdbab3"></div>
<div class="a t" style="left:17px;top:936px;font-size:15px;font-weight:bold;color:#000">Kernel Performance</div>
<div class="a" style="left:301px;top:931px;width:26px;height:26px;border:1px solid #bdbab4;border-radius:4px;background:linear-gradient(#ffffff,#efefee)"></div>
<svg class="a" style="left:301px;top:931px" width="26" height="26"><rect x="5.5" y="5.5" width="13" height="13" fill="#eef4fc" stroke="#c4ae72"/><path d="M9 17 V13 M12.5 17 V9.5 M15.5 17 V11" stroke="#1e6e1e" stroke-width="1.8"/><path d="M17 13.5 Q17 13 17.5 13.3 L21.5 17 L17.5 20.7 Q17 21 17 20.5 Z" fill="#3cc83c"/><path d="M17.6 14.5 L19.5 16.3" stroke="#b8f070" stroke-width="1"/></svg>
<svg class="a" style="left:332px;top:934px" width="18" height="18"><circle cx="9" cy="9" r="8" fill="#dcdcd8"/><path d="M5 9.5 L8 12 L13 6" fill="none" stroke="#fff" stroke-width="2"/></svg>
<div class="a" style="left:7px;top:965px;width:349px;height:38px;background:#fff;border:1px solid #bdbab3"></div>
<div class="a t" style="left:17px;top:976px;font-size:15px;font-weight:bold;color:#000">Dependency Analysis</div>
<div class="a" style="left:301px;top:971px;width:26px;height:26px;border:1px solid #bdbab4;border-radius:4px;background:linear-gradient(#ffffff,#efefee)"></div>
<svg class="a" style="left:301px;top:971px" width="26" height="26"><rect x="5.5" y="5.5" width="13" height="13" fill="#eef4fc" stroke="#c4ae72"/><path d="M9 17 V13 M12.5 17 V9.5 M15.5 17 V11" stroke="#1e6e1e" stroke-width="1.8"/><path d="M17 13.5 Q17 13 17.5 13.3 L21.5 17 L17.5 20.7 Q17 21 17 20.5 Z" fill="#3cc83c"/><path d="M17.6 14.5 L19.5 16.3" stroke="#b8f070" stroke-width="1"/></svg>
<svg class="a" style="left:332px;top:974px" width="18" height="18"><circle cx="9" cy="9" r="8" fill="#dcdcd8"/><path d="M5 9.5 L8 12 L13 6" fill="none" stroke="#fff" stroke-width="2"/></svg>
<div class="a" style="left:7px;top:1005px;width:349px;height:38px;background:#fff;border:1px solid #bdbab3"></div>
<div class="a t" style="left:17px;top:1016px;font-size:15px;font-weight:bold;color:#000">NVLink</div>
<div class="a" style="left:301px;top:1011px;width:26px;height:26px;border:1px solid #bdbab4;border-radius:4px;background:linear-gradient(#ffffff,#efefee)"></div>
<svg class="a" style="left:301px;top:1011px" width="26" height="26"><rect x="5.5" y="5.5" width="13" height="13" fill="#eef4fc" stroke="#c4ae72"/><path d="M9 17 V13 M12.5 17 V9.5 M15.5 17 V11" stroke="#1e6e1e" stroke-width="1.8"/><path d="M17 13.5 Q17 13 17.5 13.3 L21.5 17 L17.5 20.7 Q17 21 17 20.5 Z" fill="#3cc83c"/><path d="M17.6 14.5 L19.5 16.3" stroke="#b8f070" stroke-width="1"/></svg>
<svg class="a" style="left:332px;top:1014px" width="18" height="18"><circle cx="9" cy="9" r="8" fill="#dcdcd8"/><path d="M5 9.5 L8 12 L13 6" fill="none" stroke="#fff" stroke-width="2"/></svg>
<!-- ===== RESULTS ===== -->
<div class="a" style="left:364px;top:419px;width:1079px;height:725px;border:1px solid #d6d3ce;border-bottom:none;border-radius:5px 5px 0 0;box-shadow:inset 1px 1px 0 #fff"></div>
<div class="a" style="left:369px;top:410px;width:51px;height:16px;background:#f2f1f0"></div>
<div class="a t" style="left:369px;top:411px;font-size:14.3px;color:#505050">Results</div>
<div class="a" style="left:371px;top:431px;width:1050px;height:712px;border:1px solid #bcb9b2;background:#fff"></div>
<div class="a" style="left:1429px;top:426px;width:13px;height:715px;border:1px solid #c9c6c0;border-radius:7px;background:#e3e2df"></div>
<div class="a" style="left:1429px;top:426px;width:13px;height:14px;border:1px solid #c9c6c0;border-bottom:none;border-radius:7px 7px 0 0;background:#f7f7f7"></div>
<div class="a" style="left:1429px;top:1127px;width:13px;height:14px;border:1px solid #c9c6c0;border-top:none;border-radius:0 0 7px 7px;background:#f7f7f7"></div>
<div class="a" style="left:1429px;top:437px;width:13px;height:339px;border:1px solid #b3afa9;border-radius:7px;background:linear-gradient(90deg,#fdfdfd,#efeeed)"></div>
<svg class="a" style="left:1429px;top:426px" width="13" height="715"><path d="M4.5 177.5 H8.5 M4.5 180.5 H8.5 M4.5 183.5 H8.5" stroke="#a0a0a0"/><path d="M3.5 10 L9.5 10 L6.5 6.5 Z" fill="#bbb"/><path d="M3.5 705 L9.5 705 L6.5 708.5 Z" fill="#555"/></svg>
<svg class="a" style="left:380px;top:437px" width="13" height="14"><path d="M6.5 1.5 Q7.2 1.5 7.8 2.6 L11.6 10.5 Q12.2 12.5 10.5 12.5 L2.5 12.5 Q0.8 12.5 1.4 10.5 L5.2 2.6 Q5.8 1.5 6.5 1.5 Z" fill="#fbdc8c" stroke="#e0a040" stroke-width="1.1"/><rect x="5.7" y="4.5" width="1.7" height="4.3" fill="#3a2a10"/><rect x="5.7" y="9.8" width="1.7" height="1.6" fill="#3a2a10"/></svg>
<div class="a t" style="left:399px;top:438px;font-size:14.8px;font-weight:bold;color:#000">Kernel Profile - PC Sampling</div>
<div class="a t" style="left:379px;top:460px;font-size:14.55px;font-style:italic;color:#000">Optimization: Select a kernel or source file listed below to view the PC sampling information. Examine portions of the kernel that have high number of</div>
<div class="a t" style="left:379px;top:477px;font-size:14.5px;font-style:italic;color:#000">samples to know where the maximum time was spent and observe the latency reasons for those samples to identify optimization opportunities.</div>
<div class="a t" style="left:1366px;top:476px;font-size:15.3px;color:#e2532a;text-decoration:underline">More...</div>
<div class="a" style="left:378px;top:497px;width:1036px;height:66px;border:1px solid #bcb9b2;background:#fff"></div>
<div class="a" style="left:379px;top:498px;width:1034px;height:24px;background:linear-gradient(#fcfcfc,#efeeed);border-bottom:1px solid #b8b5ae"></div>
<div class="a" style="left:379px;top:522px;width:1034px;height:24px;background:linear-gradient(#e9e8e6,#dcdbd9)"></div>
<div class="a" style="left:581px;top:498px;width:1px;height:24px;background:#dcdad6"></div>
<div class="a" style="left:581px;top:522px;width:0;height:24px;border-left:1px dotted #222"></div>
<div class="a" style="left:684px;top:498px;width:1px;height:24px;background:#dcdad6"></div>
<div class="a" style="left:684px;top:522px;width:0;height:24px;border-left:1px dotted #222"></div>
<div class="a t" style="left:384px;top:504px;font-size:14.4px;color:#3c3c3c">Cuda Functions</div>
<div class="a t" style="left:587px;top:504px;font-size:14.4px;color:#3c3c3c">Sample Count</div>
<div class="a t" style="left:690px;top:504px;font-size:14.4px;color:#3c3c3c">% of Kernel Samples</div>
<div class="a t" style="left:385px;top:527px;font-size:15.5px;color:#000">Vec1of32x(int*, int*, int*, int)</div>
<div class="a t" style="left:588px;top:527px;font-size:15px;color:#000">650370</div>
<div class="a t" style="left:691px;top:527px;font-size:15px;color:#000">100.00 %</div>
<div class="a" style="left:378px;top:568px;width:1036px;height:66px;border:1px solid #bcb9b2;background:#fff"></div>
<div class="a" style="left:379px;top:569px;width:1034px;height:24px;background:linear-gradient(#fcfcfc,#efeeed);border-bottom:1px solid #b8b5ae"></div>
<div class="a" style="left:379px;top:593px;width:1034px;height:24px;background:#fff"></div>
<div class="a" style="left:531px;top:569px;width:1px;height:24px;background:#dcdad6"></div>
<div class="a" style="left:531px;top:593px;width:0;height:24px;border-left:1px dotted #222"></div>
<div class="a" style="left:634px;top:569px;width:1px;height:24px;background:#dcdad6"></div>
<div class="a" style="left:634px;top:593px;width:0;height:24px;border-left:1px dotted #222"></div>
<div class="a t" style="left:384px;top:575px;font-size:14.4px;color:#3c3c3c">Source File</div>
<div class="a t" style="left:537px;top:575px;font-size:14.4px;color:#3c3c3c">Sample Count</div>
<div class="a t" style="left:640px;top:575px;font-size:14.4px;color:#3c3c3c">% of Samples in File</div>
<div class="a t" style="left:385px;top:598px;font-size:15px;letter-spacing:0.5px;color:#000">/data/test/diverge.cu</div>
<div class="a t" style="left:538px;top:598px;font-size:15px;color:#000">650370</div>
<div class="a t" style="left:641px;top:598px;font-size:15px;color:#000">100.00 %</div>
<svg class="a" style="left:0;top:0" width="1447" height="1147">
<path d="M669.8,906.3 L801.30,906.30 A131.5,131.5 0 0 0 800.93,896.48 Z" fill="#ff8080" stroke="#ff8080" stroke-width="0.5"/>
<path d="M669.8,906.3 L800.93,896.48 A131.5,131.5 0 0 0 800.10,888.59 Z" fill="#ffc580" stroke="#ffc580" stroke-width="0.5"/>
<path d="M669.8,906.3 L800.10,888.59 A131.5,131.5 0 0 0 800.09,888.51 Z" fill="#f3ff80" stroke="#f3ff80" stroke-width="0.5"/>
<path d="M669.8,906.3 L800.09,888.51 A131.5,131.5 0 1 0 770.28,991.13 Z" fill="#aeff80" stroke="#aeff80" stroke-width="0.5"/>
<path d="M669.8,906.3 L770.28,991.13 A131.5,131.5 0 0 0 770.65,990.69 Z" fill="#80ff97" stroke="#80ff97" stroke-width="0.5"/>
<path d="M669.8,906.3 L770.65,990.69 A131.5,131.5 0 0 0 775.70,984.25 Z" fill="#80ffdc" stroke="#80ffdc" stroke-width="0.5"/>
<path d="M669.8,906.3 L775.70,984.25 A131.5,131.5 0 0 0 775.75,984.19 Z" fill="#80dcff" stroke="#80dcff" stroke-width="0.5"/>
<path d="M669.8,906.3 L775.75,984.19 A131.5,131.5 0 0 0 800.50,920.81 Z" fill="#ae80ff" stroke="#ae80ff" stroke-width="0.5"/>
<path d="M669.8,906.3 L800.50,920.81 A131.5,131.5 0 0 0 801.30,906.30 Z" fill="#f380ff" stroke="#f380ff" stroke-width="0.5"/>
<path d="M525.5,866.4 L538,866.4 L543.6,869.6" fill="none" stroke="#222" stroke-width="1.1"/>
<path d="M800.3,888.8 L823.5,861.4 L837.5,861.4" fill="none" stroke="#222" stroke-width="1.1"/>
<path d="M801.5,892.3 L824.1,894.3 L837.5,894.3" fill="none" stroke="#222" stroke-width="1.1"/>
<path d="M801.5,901 L825.3,927.3 L839.4,927.3" fill="none" stroke="#222" stroke-width="1.1"/>
<path d="M801.5,913.3 L824.1,960.3 L837.5,960.3" fill="none" stroke="#222" stroke-width="1.1"/>
<path d="M792.4,954.2 L797.2,993.4 L811.3,993.4" fill="none" stroke="#222" stroke-width="1.1"/>
<path d="M776.3,984.5 L799.6,1026.5 L812.2,1026.5" fill="none" stroke="#222" stroke-width="1.1"/>
<path d="M775.5,987 L799.1,1059.1 L812.2,1059.1" fill="none" stroke="#222" stroke-width="1.1"/>
<path d="M773,987.7 L797.2,1092 L810.5,1092" fill="none" stroke="#222" stroke-width="1.1"/>
<path d="M770.6,991 L794.2,1125.4 L808,1125.4" fill="none" stroke="#222" stroke-width="1.1"/>
<rect x="974.5" y="754.5" width="13" height="13" fill="#ff8080" stroke="#7a7a7a"/>
<rect x="974.5" y="789.8" width="13" height="13" fill="#ffc580" stroke="#7a7a7a"/>
<rect x="974.5" y="825.1" width="13" height="13" fill="#f3ff80" stroke="#7a7a7a"/>
<rect x="974.5" y="860.4" width="13" height="13" fill="#aeff80" stroke="#7a7a7a"/>
<rect x="974.5" y="895.7" width="13" height="13" fill="#80ff97" stroke="#7a7a7a"/>
<rect x="974.5" y="931.0" width="13" height="13" fill="#80ffdc" stroke="#7a7a7a"/>
<rect x="974.5" y="966.3" width="13" height="13" fill="#80dcff" stroke="#7a7a7a"/>
<rect x="974.5" y="1001.6" width="13" height="13" fill="#8097ff" stroke="#7a7a7a"/>
<rect x="974.5" y="1036.9" width="13" height="13" fill="#ae80ff" stroke="#7a7a7a"/>
<rect x="974.5" y="1072.2" width="13" height="13" fill="#f380ff" stroke="#7a7a7a"/>
</svg>
<div class="a t" style="left:669px;top:644px;font-size:19.6px;font-weight:bold;letter-spacing:0.45px;color:#000">Sample distribution</div>
<div class="a" style="left:392.4px;top:851.0px;font-size:13.6px;line-height:15px;color:#000;white-space:pre">memory dependency<br>86.69 %</div>
<div class="a" style="left:839.6px;top:846.2px;font-size:13.6px;line-height:15px;color:#000;white-space:pre">pipe busy<br>0.01 %</div>
<div class="a" style="left:839.6px;top:879.2px;font-size:13.6px;line-height:15px;color:#000;white-space:pre">other<br>0.96 %</div>
<div class="a" style="left:841.0px;top:912.2px;font-size:13.6px;line-height:15px;color:#000;white-space:pre">texture<br>1.19 %</div>
<div class="a" style="left:839.6px;top:945.2px;font-size:13.6px;line-height:15px;color:#000;white-space:pre">instruction fetch<br>1.76 %</div>
<div class="a" style="left:813.5px;top:978.0px;font-size:13.6px;line-height:15px;color:#000;white-space:pre">execution dependency<br>8.33 %</div>
<div class="a" style="left:815.4px;top:1011.0px;font-size:13.6px;line-height:15px;color:#000;white-space:pre">memory throttle<br>0.00 %</div>
<div class="a" style="left:815.4px;top:1044.0px;font-size:13.6px;line-height:15px;color:#000;white-space:pre">constant<br>0.01 %</div>
<div class="a" style="left:812.2px;top:1077.0px;font-size:13.6px;line-height:15px;color:#000;white-space:pre">instruction issued<br>0.99 %</div>
<div class="a" style="left:810.5px;top:1110.0px;font-size:13.6px;line-height:15px;color:#000;white-space:pre">not selected<br>0.07 %</div>
<div class="a" style="left:1002.0px;top:745.7px;font-size:13.6px;line-height:15px;color:#000;white-space:pre">texture<br>1.19 %</div>
<div class="a" style="left:1002.0px;top:781.0px;font-size:13.6px;line-height:15px;color:#000;white-space:pre">other<br>0.96 %</div>
<div class="a" style="left:1002.0px;top:816.3px;font-size:13.6px;line-height:15px;color:#000;white-space:pre">pipe busy<br>0.01 %</div>
<div class="a" style="left:1002.0px;top:851.6px;font-size:13.6px;line-height:15px;color:#000;white-space:pre">memory dependency<br>86.69 %</div>
<div class="a" style="left:1002.0px;top:886.9px;font-size:13.6px;line-height:15px;color:#000;white-space:pre">not selected<br>0.07 %</div>
<div class="a" style="left:1002.0px;top:922.2px;font-size:13.6px;line-height:15px;color:#000;white-space:pre">instruction issued<br>0.99 %</div>
<div class="a" style="left:1002.0px;top:957.5px;font-size:13.6px;line-height:15px;color:#000;white-space:pre">constant<br>0.01 %</div>
<div class="a" style="left:1002.0px;top:992.8px;font-size:13.6px;line-height:15px;color:#000;white-space:pre">memory throttle<br>0.00 %</div>
<div class="a" style="left:1002.0px;top:1028.1px;font-size:13.6px;line-height:15px;color:#000;white-space:pre">execution dependency<br>8.33 %</div>
<div class="a" style="left:1002.0px;top:1063.4px;font-size:13.6px;line-height:15px;color:#000;white-space:pre">instruction fetch<br>1.76 %</div>
</body></html>
